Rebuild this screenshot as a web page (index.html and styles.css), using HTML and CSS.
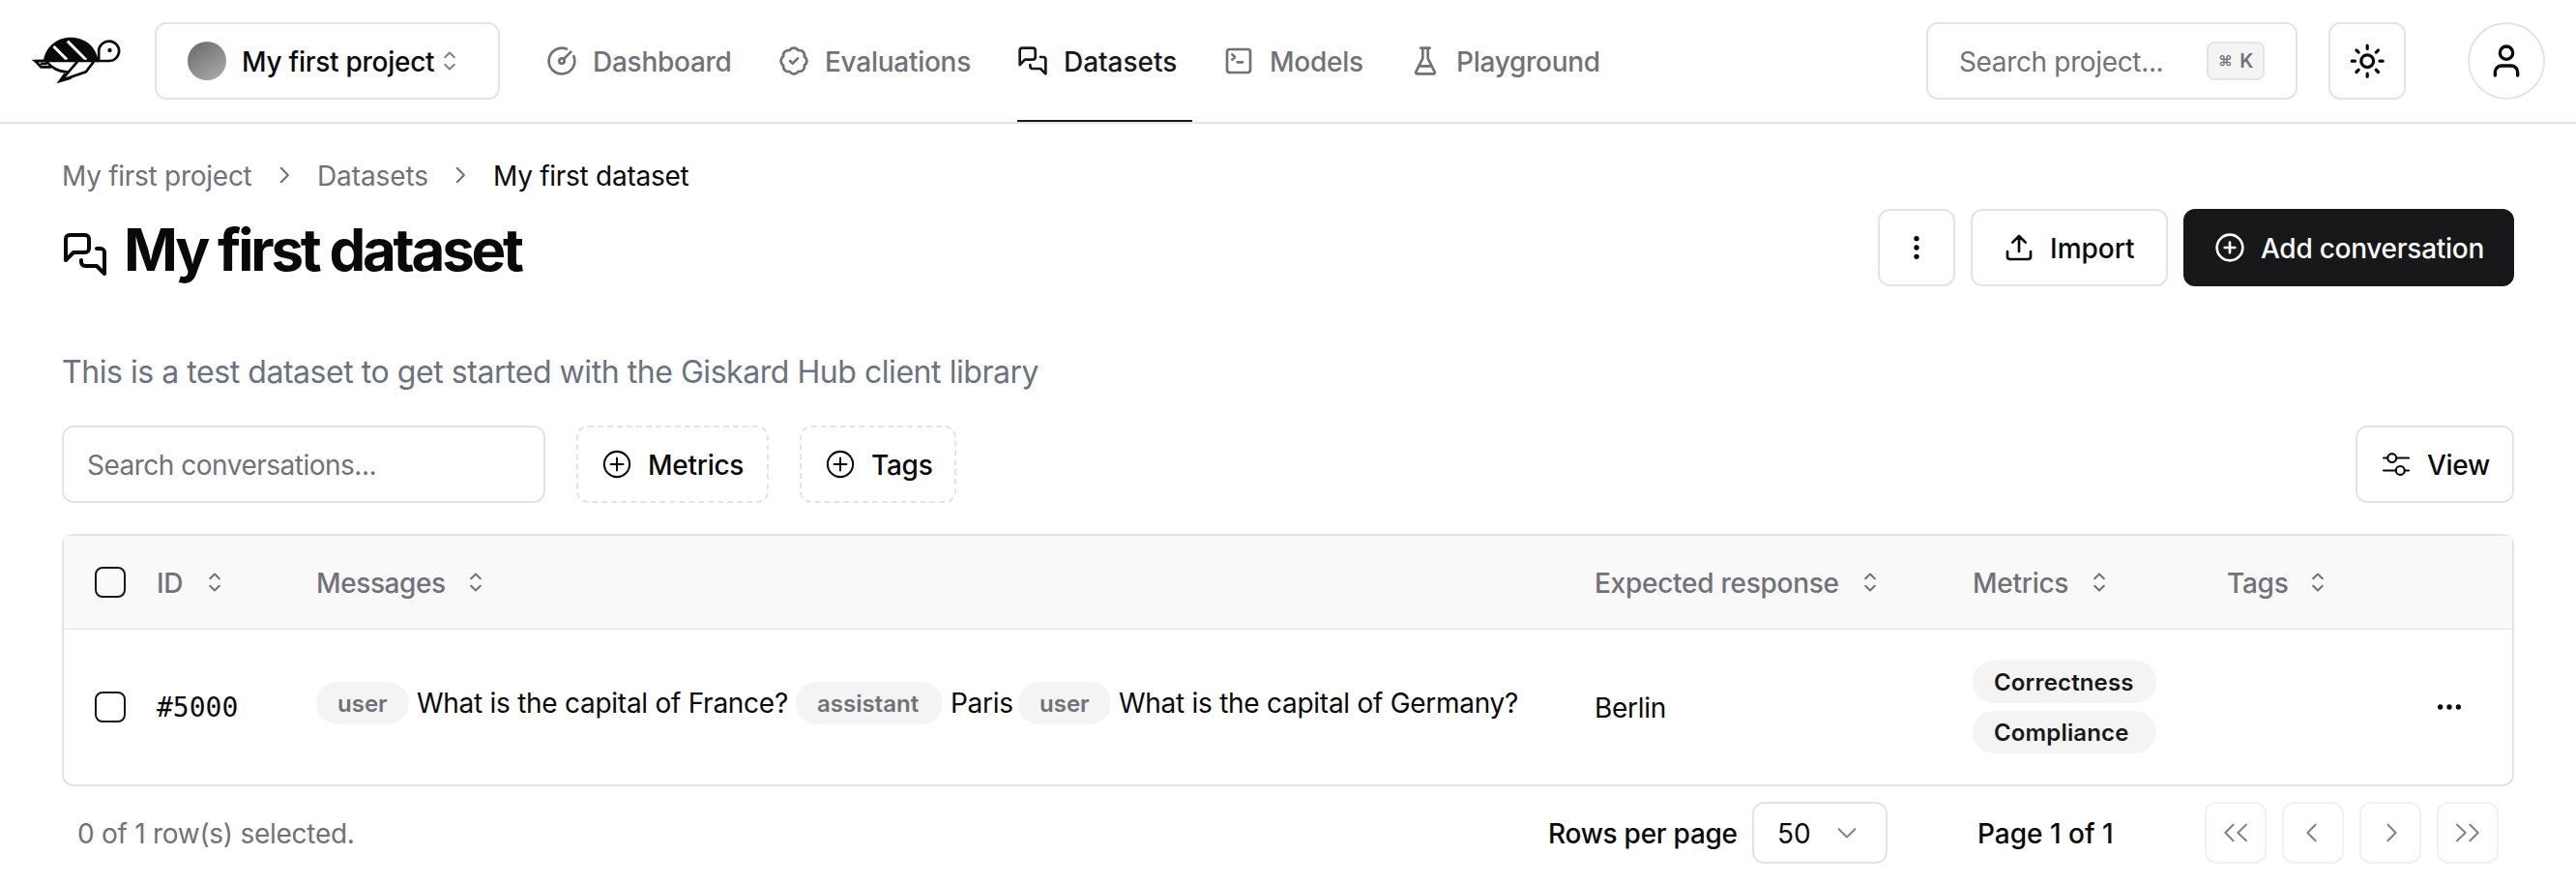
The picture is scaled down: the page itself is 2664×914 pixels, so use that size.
FILE: index.html
```
<!DOCTYPE html>
<html lang="en">
<head>
<meta charset="utf-8">
<title>My first dataset</title>
<link rel="stylesheet" href="styles.css">
</head>
<body>
<svg class="sprite" aria-hidden="true">
  <symbol id="sort" viewBox="0 0 15 15"><path d="M5.25 5.75 7.5 3.5l2.25 2.25M5.25 9.25 7.5 11.5l2.25-2.25"/></symbol>
  <symbol id="plus" viewBox="0 0 15 15"><circle cx="7.5" cy="7.5" r="6.15"/><path d="M7.5 4.5v6M4.5 7.5h6"/></symbol>
  <symbol id="chev-right" viewBox="0 0 15 15"><path d="M6.3 3.6 10.1 7.5 6.3 11.4"/></symbol>
  <symbol id="chev-left" viewBox="0 0 15 15"><path d="M8.7 3.6 4.9 7.5l3.8 3.9"/></symbol>
  <symbol id="messages" viewBox="0 0 24 24"><path d="M14 9a2 2 0 0 1-2 2H6l-4 4V4a2 2 0 0 1 2-2h8a2 2 0 0 1 2 2z"/><path d="M18 9h2a2 2 0 0 1 2 2v11l-4-4h-6a2 2 0 0 1-2-2v-1"/></symbol>
</svg>

<header class="topbar">
  <svg class="logo" viewBox="34 52 284 150">
    <path d="M75 131C80 88 115 57 160 57s78 28 86 74z"/>
    <path class="logo-cut" d="M107 85l41 41M150 69l58 58"/>
    <path class="logo-line" d="M247 130V97a31.5 30.5 0 1 1 31.500 33z"/>
    <path class="logo-line" d="M49 130h198M50 130l18 19h32M66 139h20M84 131c16 20 42 33 68 34M181 132l-50 58 76-26 25-33"/>
    <path d="M38 126h40v8H48zM116 200l24-33 6 12-10 10 30-8-6 6z"/>
    <circle cx="281" cy="97" r="6.500"/>
  </svg>
  <button class="box project">
    <span class="project-dot"></span>
    <span class="project-name">My first project</span>
    <svg class="ic thin faded"><use href="#sort"/></svg>
  </button>
  <nav class="nav">
    <a class="nav-item nav-dashboard"><svg class="ic" viewBox="0 0 24 24"><path d="M15.6 2.7a10 10 0 1 0 5.7 5.7"/><circle cx="12" cy="12" r="2"/><path d="M13.4 10.6 19 5"/></svg><span>Dashboard</span></a>
    <a class="nav-item nav-evaluations"><svg class="ic" viewBox="0 0 24 24"><path d="M3.85 8.62a4 4 0 0 1 4.78-4.77 4 4 0 0 1 6.74 0 4 4 0 0 1 4.78 4.78 4 4 0 0 1 0 6.74 4 4 0 0 1-4.77 4.78 4 4 0 0 1-6.75 0 4 4 0 0 1-4.78-4.77 4 4 0 0 1 0-6.76Z"/><path d="m9 12 2 2 4-4"/></svg><span>Evaluations</span></a>
    <a class="nav-item nav-datasets active"><svg class="ic"><use href="#messages"/></svg><span>Datasets</span></a>
    <a class="nav-item nav-models"><svg class="ic" viewBox="0 0 24 24"><path d="m7 11 2-2-2-2M11 13h4"/><rect x="3" y="3" width="18" height="18" rx="2"/></svg><span>Models</span></a>
    <a class="nav-item"><svg class="ic" viewBox="0 0 24 24"><path d="M10 2v7.527a2 2 0 0 1-.211.896L4.72 20.55a1 1 0 0 0 .9 1.45h12.76a1 1 0 0 0 .9-1.45l-5.069-10.127A2 2 0 0 1 14 9.527V2M8.5 2h7M7 16h10"/></svg><span>Playground</span></a>
  </nav>
  <div class="tools">
    <button class="box search-project"><span>Search project...</span><kbd><span class="cmd">⌘</span><span>K</span></kbd></button>
    <button class="box square"><svg class="ic ic-sun" viewBox="0 0 24 24"><circle cx="12" cy="12" r="4"/><path d="M12 2v2M12 20v2M4.93 4.93l1.41 1.41M17.66 17.66l1.41 1.41M2 12h2M20 12h2M6.34 17.66l-1.41 1.41M19.07 4.93l-1.41 1.41"/></svg></button>
    <button class="box square avatar"><svg class="ic ic-user" viewBox="0 0 24 24"><path d="M19 21v-2a4 4 0 0 0-4-4H9a4 4 0 0 0-4 4v2"/><circle cx="12" cy="7" r="4"/></svg></button>
  </div>
</header>

<main class="page">
  <div class="crumbs">
    <a class="crumb-project">My first project</a>
    <svg class="ic thin ic-crumb"><use href="#chev-right"/></svg>
    <a class="crumb-datasets">Datasets</a>
    <svg class="ic thin ic-crumb"><use href="#chev-right"/></svg>
    <span class="current">My first dataset</span>
  </div>
  <div class="heading">
    <svg class="ic ic-title"><use href="#messages"/></svg>
    <h1>My first dataset</h1>
    <div class="actions">
      <button class="box square"><svg class="ic" viewBox="0 0 24 24"><circle cx="12" cy="5" r="1"/><circle cx="12" cy="12" r="1"/><circle cx="12" cy="19" r="1"/></svg></button>
      <button class="box import"><svg class="ic" viewBox="0 0 24 24"><path d="M21 15v4a2 2 0 0 1-2 2H5a2 2 0 0 1-2-2v-4M17 8l-5-5-5 5M12 3v12"/></svg><span>Import</span></button>
      <button class="box add"><svg class="ic" viewBox="0 0 24 24"><circle cx="12" cy="12" r="10"/><path d="M8 12h8M12 8v8"/></svg><span>Add conversation</span></button>
    </div>
  </div>
  <p class="description">This is a test dataset to get started with the Giskard Hub client library</p>
  <div class="filters">
    <div class="box search"><span>Search conversations...</span></div>
    <button class="box dashed f-metrics"><svg class="ic thin"><use href="#plus"/></svg><span>Metrics</span></button>
    <button class="box dashed f-tags"><svg class="ic thin"><use href="#plus"/></svg><span>Tags</span></button>
    <button class="box view"><svg class="ic thin" viewBox="0 0 15 15"><circle cx="5.5" cy="4.5" r="2.1"/><circle cx="9.5" cy="10.5" r="2.1"/><path d="M1.4 4.5h2M7.6 4.5h6M1.4 10.5h6M11.6 10.5h2"/></svg><span>View</span></button>
  </div>

  <section class="table">
    <div class="row head">
      <span class="check"></span>
      <div class="th"><span class="t-id">ID</span><svg class="ic thin"><use href="#sort"/></svg></div>
      <div class="th"><span class="t-messages">Messages</span><svg class="ic thin"><use href="#sort"/></svg></div>
      <div class="th"><span class="t-expected">Expected response</span><svg class="ic thin"><use href="#sort"/></svg></div>
      <div class="th"><span class="t-metrics">Metrics</span><svg class="ic thin"><use href="#sort"/></svg></div>
      <div class="th"><span class="t-tags">Tags</span><svg class="ic thin"><use href="#sort"/></svg></div>
      <span></span>
    </div>
    <div class="row body">
      <span class="check"></span>
      <span class="mono">#5000</span>
      <div class="messages">
        <span class="badge role">user</span><span class="msg msg-1">What is the capital of France?</span><span class="badge role role-assistant">assistant</span><span class="msg msg-2">Paris</span><span class="badge role">user</span><span class="msg msg-3">What is the capital of Germany?</span>
      </div>
      <span class="berlin">Berlin</span>
      <div class="metrics"><span class="badge">Correctness</span><span class="badge">Compliance</span></div>
      <span></span>
      <svg class="ic more" viewBox="0 0 24 24"><circle cx="5" cy="12" r="1"/><circle cx="12" cy="12" r="1"/><circle cx="19" cy="12" r="1"/></svg>
    </div>
  </section>

  <footer class="pager">
    <span class="selected">0 of 1 row(s) selected.</span>
    <span class="rows-label">Rows per page</span>
    <button class="box select"><span>50</span><svg class="ic thin faded" viewBox="0 0 15 15"><path d="M3.6 5.7 7.5 9.6l3.9-3.9"/></svg></button>
    <span class="page-label">Page 1 of 1</span>
    <div class="pages">
      <button class="box page-btn"><svg class="ic thin" viewBox="0 0 15 15"><path d="M6.4 3.6 2.5 7.5l3.9 3.9M12.6 3.6 8.6 7.5l4 3.9"/></svg></button>
      <button class="box page-btn"><svg class="ic thin"><use href="#chev-left"/></svg></button>
      <button class="box page-btn"><svg class="ic thin"><use href="#chev-right"/></svg></button>
      <button class="box page-btn"><svg class="ic thin" viewBox="0 0 15 15"><path d="M2.4 3.6 6.4 7.5l-4 3.9M8.6 3.6l3.9 3.9-3.9 3.9"/></svg></button>
    </div>
  </footer>
</main>
</body>
</html>
```
FILE: styles.css
```
* { box-sizing: border-box; }
body { margin: 0; background: #fff; color: #09090b; font: 400 28px/40px Inter, "Liberation Sans", sans-serif; letter-spacing: -0.27px; white-space: nowrap; }
button { font: inherit; letter-spacing: inherit; color: inherit; padding: 0; margin: 0; }
.sprite { position: absolute; width: 0; height: 0; }
.ic { width: 32px; height: 32px; flex: none; fill: none; stroke: currentColor; stroke-width: 2; stroke-linecap: round; stroke-linejoin: round; }
.thin { stroke-width: 0.95; }
.faded { opacity: 0.5; }
.box { display: flex; align-items: center; flex: none; height: 80px; border: 2px solid #e4e4e7; border-radius: 12px; background: #fff; font-weight: 500; }
.square { width: 80px; justify-content: center; }
.box > span:not(.project-dot), .nav-item > span, .th > span, .mono, .berlin, .pager > span { padding-top: 2px; }

.topbar { display: flex; align-items: flex-start; height: 128px; padding: 23px 32px 0 31px; border-bottom: 2px solid #e4e4e7; }
.logo { width: 95px; height: 50px; margin-top: 14px; margin-right: 34px; fill: #09090b; }
.logo-line { fill: none; stroke: #09090b; stroke-width: 8; }
.logo-cut { fill: none; stroke: #fff; stroke-width: 9; }
.project { width: 357px; padding-left: 32px; }
.project-dot { width: 40px; height: 40px; border-radius: 50%; background: linear-gradient(145deg, #666, #b0b0b0); }
.project-name { width: 199px; margin-left: 16px; }
.nav { display: flex; gap: 32px; margin-left: 48px; }
.nav-item { display: flex; align-items: center; gap: 16px; height: 103px; padding-bottom: 23px; color: #71717a; font-weight: 500; }
.nav-dashboard { width: 208px; }
.nav-evaluations { width: 215px; }
.nav-datasets { width: 181px; letter-spacing: -0.05px; }
.nav-models { width: 161px; }
.active { color: #18181b; border-bottom: 2px solid #18181b; padding-bottom: 21px; }
.tools { display: flex; margin-left: auto; }
.search-project { width: 384px; padding: 0 32px; justify-content: space-between; color: #71717a; font-weight: 400; letter-spacing: -0.35px; margin-right: 32px; }
kbd { display: flex; align-items: center; justify-content: center; gap: 8px; width: 60px; height: 40px; border: 2px solid #e4e4e7; border-radius: 8px; background: #f4f4f5; font: 600 20px/30px Inter, sans-serif; }
.cmd { font-size: 15px; }
.ic-sun { width: 38.4px; height: 38.4px; }
.ic-user { width: 40px; height: 40px; }
.avatar { border-radius: 50%; margin-left: 64px; }

.page { padding: 0 64px; }
.crumbs { display: flex; align-items: center; height: 40px; margin-top: 33px; color: #71717a; }
.crumbs > :not(svg) { padding-top: 1px; }
.ic-crumb { width: 28px; height: 28px; stroke-width: 1.1; }
.crumb-project { width: 196px; margin-right: 19px; }
.crumb-datasets { width: 113px; margin: 0 20px 0 21px; letter-spacing: -0.1px; }
.current { margin-left: 21px; color: #09090b; }
.heading { display: flex; align-items: center; height: 80px; margin-top: 15px; }
.ic-title { width: 48px; height: 48px; margin-top: 14px; }
h1 { margin: 4px 0 0 16px; font-size: 60px; line-height: 72px; font-weight: 700; letter-spacing: -3.25px; }
.actions { display: flex; gap: 16px; margin-left: auto; }
.import { width: 204px; padding-left: 32px; gap: 16px; letter-spacing: 0; }
.add { width: 342px; padding-left: 30px; gap: 16px; border-color: #18181b; background: #18181b; color: #fafafa; }
.description { margin: 64px 0 0; padding-top: 1px; height: 48px; font-size: 32px; line-height: 48px; letter-spacing: -0.45px; color: #6b7280; }
.filters { display: flex; gap: 32px; margin-top: 32px; }
.search { width: 500px; padding-left: 24px; color: #71717a; font-weight: 400; letter-spacing: -0.5px; }
.dashed { border-style: dashed; padding-left: 24px; gap: 16px; }
.f-metrics { width: 199px; }
.f-tags { width: 162px; }
.view { width: 164px; padding-left: 24px; gap: 16px; margin-left: auto; }

.table { margin-top: 32px; height: 261px; border: 2px solid #e4e4e7; border-radius: 12px; }
.row { display: grid; grid-template-columns: 64px 165px 1322px 391px 263px 214px 32px; align-items: center; padding-left: 32px; }
.head { height: 97px; border-bottom: 1px solid #e4e4e7; background: #f9f9f9; color: #71717a; font-weight: 500; }
.body { height: 160px; }
.check { width: 32px; height: 32px; border: 2px solid #18181b; border-radius: 8px; }
.th { display: flex; align-items: center; gap: 16px; }
.t-id { width: 28px; }
.t-messages { width: 133px; letter-spacing: -0.4px; }
.t-expected { width: 253px; }
.t-metrics { width: 99px; }
.t-tags { width: 62px; }
.mono { font-family: "DejaVu Sans Mono", monospace; letter-spacing: 0; }
.messages { display: flex; align-items: center; margin-top: -9px; }
.badge { height: 44px; padding: 0 22px; border-radius: 22px; background: #f4f4f5; color: #18181b; font-size: 24px; line-height: 45px; font-weight: 600; letter-spacing: 0.15px; }
.role { width: 96px; color: #71717a; letter-spacing: 0; }
.role-assistant { width: 152px; }
.msg { margin-left: 8px; }
.msg-1 { width: 392px; }
.msg-2 { width: 70px; }
.metrics { display: grid; gap: 8px; width: 190px; }

.pager { display: flex; align-items: center; height: 64px; margin-top: 16px; padding: 0 16px; }
.selected { color: #71717a; }
.rows-label { width: 194px; margin-left: auto; font-weight: 500; }
.select { width: 140px; height: 64px; margin-left: 17px; padding: 0 24px; justify-content: space-between; font-weight: 400; letter-spacing: 0; }
.page-label { width: 142px; margin-left: 93px; font-weight: 500; letter-spacing: 0; }
.pages { display: flex; gap: 16px; margin-left: 93px; }
.page-btn { width: 64px; height: 64px; justify-content: center; opacity: 0.5; }
```
